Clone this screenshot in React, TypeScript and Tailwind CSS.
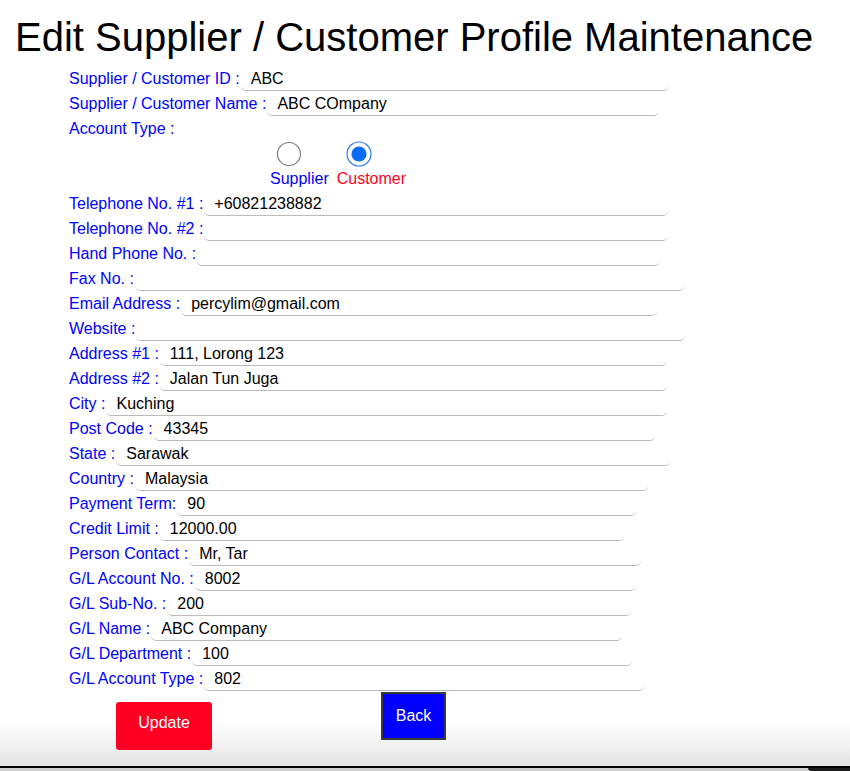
import React from "react";

type Row = { label: string; value: string; w: number };

const topRows: Row[] = [
  { label: "Supplier / Customer ID :", value: "ABC", w: 428 },
  { label: "Supplier / Customer Name :", value: "ABC COmpany", w: 392 },
];

const rows: Row[] = [
  { label: "Telephone No. #1 :", value: "+60821238882", w: 464 },
  { label: "Telephone No. #2 :", value: "", w: 464 },
  { label: "Hand Phone No. :", value: "", w: 463 },
  { label: "Fax No. :", value: "", w: 549 },
  { label: "Email Address :", value: "percylim@gmail.com", w: 476 },
  { label: "Website :", value: "", w: 549 },
  { label: "Address #1 :", value: "111, Lorong 123", w: 507 },
  { label: "Address #2 :", value: "Jalan Tun Juga", w: 507 },
  { label: "City :", value: "Kuching", w: 561 },
  { label: "Post Code :", value: "43345", w: 501 },
  { label: "State :", value: "Sarawak", w: 554 },
  { label: "Country :", value: "Malaysia", w: 513 },
  { label: "Payment Term:", value: "90", w: 459 },
  { label: "Credit Limit :", value: "12000.00", w: 464 },
  { label: "Person Contact :", value: "Mr, Tar", w: 452 },
  { label: "G/L Account No. :", value: "8002", w: 441 },
  { label: "G/L Sub-No. :", value: "200", w: 464 },
  { label: "G/L Name :", value: "ABC Company", w: 471 },
  { label: "G/L Department :", value: "100", w: 440 },
  { label: "G/L Account Type :", value: "802", w: 440 },
];

function FieldRow({ r }: { r: Row }) {
  return (
    <div className="flex h-[25px] items-center">
      <span className="whitespace-pre text-[16px] leading-[18px] text-[#0000ff]">{r.label}</span>
      <input
        readOnly
        value={r.value}
        style={{ width: r.w }}
        className="ml-[1px] h-[25px] self-end rounded-[5px] border-0 border-b border-solid border-[#bbbbbb] bg-white pl-[10px] pt-[2px] text-[16px] text-black outline-none"
      />
    </div>
  );
}

function Radio({ checked }: { checked: boolean }) {
  return (
    <svg width="26" height="26" viewBox="0 0 26 26">
      {checked ? (
        <>
          <circle cx="13" cy="13" r="12" fill="white" stroke="#2a7cf0" strokeWidth="1.2" />
          <circle cx="13" cy="13" r="7.6" fill="#0a6cf5" />
        </>
      ) : (
        <circle cx="13" cy="13" r="11.5" fill="white" stroke="#767676" strokeWidth="1.1" />
      )}
    </svg>
  );
}

export default function App() {
  return (
    <div
      className="flex h-[771px] w-[850px] flex-col overflow-hidden"
      style={{ fontFamily: '"Liberation Sans", Arial, sans-serif' }}
    >
      <div className="flex-1 bg-[linear-gradient(to_bottom,#ffffff_0px,#ffffff_722px,#e4e4e4_766px)]">
        <h1 className="mt-[14px] pl-[15px] text-[40px] font-normal leading-[46px] text-black">
          Edit Supplier / Customer Profile Maintenance
        </h1>
        <div className="ml-[69px] mt-[6px] flex flex-col">
          {topRows.map((r) => (
            <FieldRow key={r.label} r={r} />
          ))}
          <div className="flex h-[25px] items-center">
            <span className="text-[16px] leading-[18px] text-[#0000ff]">Account Type :</span>
          </div>
          <div className="flex h-[25px] items-center pl-[207px]">
            <Radio checked={false} />
            <div className="ml-[44px]">
              <Radio checked={true} />
            </div>
          </div>
          <div className="flex h-[25px] items-center pl-[201px] text-[16px] leading-[18px]">
            <span className="text-[#0000ff]">Supplier</span>
            <span className="ml-[8px] text-[#ff0022]">Customer</span>
          </div>
          {rows.map((r) => (
            <FieldRow key={r.label} r={r} />
          ))}
        </div>
        <div className="flex items-start pl-[116px]">
          <button className="mt-[11px] h-[48px] w-[96px] rounded-[3px] bg-[#ff0022] pb-[6px] text-[16px] text-white">
            Update
          </button>
          <button className="ml-[169px] mt-[1px] h-[48px] w-[65px] border-2 border-solid border-[#3a3a3a] bg-[#0000ff] text-[16px] text-white">
            Back
          </button>
        </div>
      </div>
      <div className="h-[2px] bg-black" />
      <div className="flex h-[3px]">
        <div className="flex-1 bg-[#cfcfcf]" />
        <div className="w-[42px] rounded-bl-[10px] bg-[#1c1c1c]" />
      </div>
    </div>
  );
}
